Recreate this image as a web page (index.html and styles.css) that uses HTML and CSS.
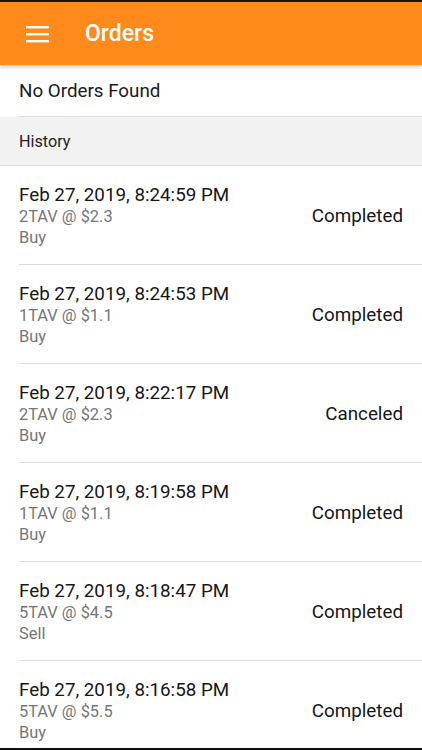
FILE: index.html
```html
<!DOCTYPE html>
<html>
<head>
<meta charset="utf-8">
<link rel="stylesheet" href="styles.css">
</head>
<body>
<div class="screen">
  <header class="toolbar">
    <svg class="menu" width="24" height="18" viewBox="0 0 24 18">
      <rect x="0" y="1" width="23" height="2.4" fill="#fff"/>
      <rect x="0" y="8" width="23" height="2.4" fill="#fff"/>
      <rect x="0" y="15" width="23" height="2.4" fill="#fff"/>
    </svg>
    <h1 class="title">Orders</h1>
  </header>
  <div class="content">
    <div class="empty">No Orders Found</div>
    <div class="section">History</div>
    <ul class="list">
      <li class="item"><div class="info"><div class="date">Feb 27, 2019, 8:24:59 PM</div><div class="sub">2TAV @ $2.3</div><div class="sub">Buy</div></div><div class="status">Completed</div></li>
      <li class="item"><div class="info"><div class="date">Feb 27, 2019, 8:24:53 PM</div><div class="sub">1TAV @ $1.1</div><div class="sub">Buy</div></div><div class="status">Completed</div></li>
      <li class="item"><div class="info"><div class="date">Feb 27, 2019, 8:22:17 PM</div><div class="sub">2TAV @ $2.3</div><div class="sub">Buy</div></div><div class="status">Canceled</div></li>
      <li class="item"><div class="info"><div class="date">Feb 27, 2019, 8:19:58 PM</div><div class="sub">1TAV @ $1.1</div><div class="sub">Buy</div></div><div class="status">Completed</div></li>
      <li class="item"><div class="info"><div class="date">Feb 27, 2019, 8:18:47 PM</div><div class="sub">5TAV @ $4.5</div><div class="sub">Sell</div></div><div class="status">Completed</div></li>
      <li class="item"><div class="info"><div class="date">Feb 27, 2019, 8:16:58 PM</div><div class="sub">5TAV @ $5.5</div><div class="sub">Buy</div></div><div class="status">Completed</div></li>
    </ul>
  </div>
</div>
</body>
</html>
```
FILE: styles.css
```css
* { box-sizing: border-box; }
html, body { margin: 0; padding: 0; }
body {
  width: 422px;
  height: 750px;
  overflow: hidden;
  font-family: Roboto, "Noto Sans", sans-serif;
  background: #fff;
}
.screen {
  height: 750px;
  border-top: 2px solid #1b1208;
  border-bottom: 2px solid #111;
  display: flex;
  flex-direction: column;
  overflow: hidden;
}
.toolbar {
  height: 63px;
  flex: none;
  background: #fe8a1b;
  display: flex;
  align-items: center;
  padding-left: 26px;
  position: relative;
  z-index: 1;
  box-shadow: 0 2px 4px rgba(0,0,0,0.22);
}
.menu { display: block; }
.title {
  margin: 0 0 0 35px;
  color: #fff;
  font-size: 23px;
  font-weight: 500;
}
.content { flex: 1; overflow: hidden; }
.empty {
  height: 52px;
  display: flex;
  align-items: center;
  padding-left: 19px;
  font-size: 18.8px;
  color: #1a1a1a;
  position: relative;
}
.empty::after {
  content: "";
  position: absolute;
  left: 19px; right: 0; bottom: 0;
  height: 1px;
  background: #dcdcdc;
}
.section {
  height: 49px;
  display: flex;
  align-items: center;
  padding-left: 19px;
  background: #f2f2f2;
  border-bottom: 1px solid #dedede;
  font-size: 16.2px;
  color: #222;
}
.list { list-style: none; margin: 0; padding: 0; }
.item {
  height: 99px;
  display: flex;
  align-items: center;
  justify-content: space-between;
  padding: 0 19px;
  position: relative;
}
.item::after {
  content: "";
  position: absolute;
  left: 19px; right: 0; bottom: 0;
  height: 1px;
  background: #dcdcdc;
}
.info { display: flex; flex-direction: column; }
.date {
  font-size: 18.8px;
  color: #161616;
  line-height: 22px;
}
.sub {
  font-size: 16.4px;
  color: #757575;
  line-height: 21px;
}
.status {
  font-size: 18.8px;
  color: #161616;
}
```
